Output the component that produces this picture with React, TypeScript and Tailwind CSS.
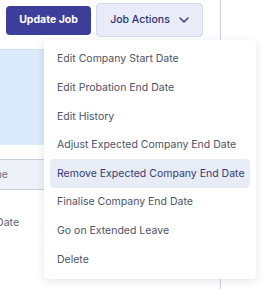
import React from "react";

const items = [
  "Edit Company Start Date",
  "Edit Probation End Date",
  "Edit History",
  "Adjust Expected Company End Date",
  "Remove Expected Company End Date",
  "Finalise Company End Date",
  "Go on Extended Leave",
  "Delete",
];

export default function App() {
  return (
    <div
      className="relative w-[264px] h-[289px] overflow-hidden bg-white"
      style={{ fontFamily: "Inter, 'Noto Sans', sans-serif" }}
    >
      <div className="flex h-full">
        <div className="w-[220px] flex flex-col shrink-0">
          <div className="flex items-center gap-[5px] pl-[6px] pt-[3px] h-[37px]">
            <button className="h-[29px] w-[85px] rounded-[4px] bg-[#3d3e9a] text-white text-[10.5px] font-bold flex items-center justify-center">
              Update Job
            </button>
            <button className="h-[34px] w-[107px] rounded-[4px] bg-[#e9ecf8] border border-[#d3d9ee] text-[#2d3170] text-[10.5px] font-medium flex items-center justify-center gap-[9px]">
              <span>Job Actions</span>
              <svg width="10" height="6" viewBox="0 0 10 6" fill="none">
                <path d="M1 1l4 4 4-4" stroke="#2d3170" strokeWidth="1.3" strokeLinecap="round" strokeLinejoin="round" />
              </svg>
            </button>
          </div>
          <div className="mt-[12px] h-[96px] bg-[#dcebfb] border-t border-[#cfe0f5]" />
          <div className="mt-[14px] h-[31px] bg-[#eef1f8] border-y border-[#c7cddd] flex items-center">
            <div className="w-[8px] flex justify-end whitespace-nowrap text-[10.5px] text-[#6a6f85]">Name</div>
          </div>
          <div className="h-[66px] flex items-center">
            <div className="w-[19px] flex justify-end whitespace-nowrap text-[10.5px] text-[#5a5f73]">End Date</div>
          </div>
        </div>
        <div className="flex-1 border-l border-[#c9cee2]" />
      </div>

      <div className="absolute left-[44px] top-[40px] w-[212px] bg-white rounded-[4px] shadow-[0_2px_10px_rgba(30,40,80,0.12)] py-[5px] px-[6px]">
        {items.map((it) => {
          const active = it === "Remove Expected Company End Date";
          return (
            <div
              key={it}
              className={
                active
                  ? "h-[28.6px] px-[7px] flex items-center rounded-[4px] bg-[#e8ecf7] text-[10.5px] text-[#353a72] whitespace-nowrap"
                  : "h-[28.6px] px-[7px] flex items-center text-[10.5px] text-[#4d5266] whitespace-nowrap"
              }
            >
              {it}
            </div>
          );
        })}
      </div>
    </div>
  );
}
